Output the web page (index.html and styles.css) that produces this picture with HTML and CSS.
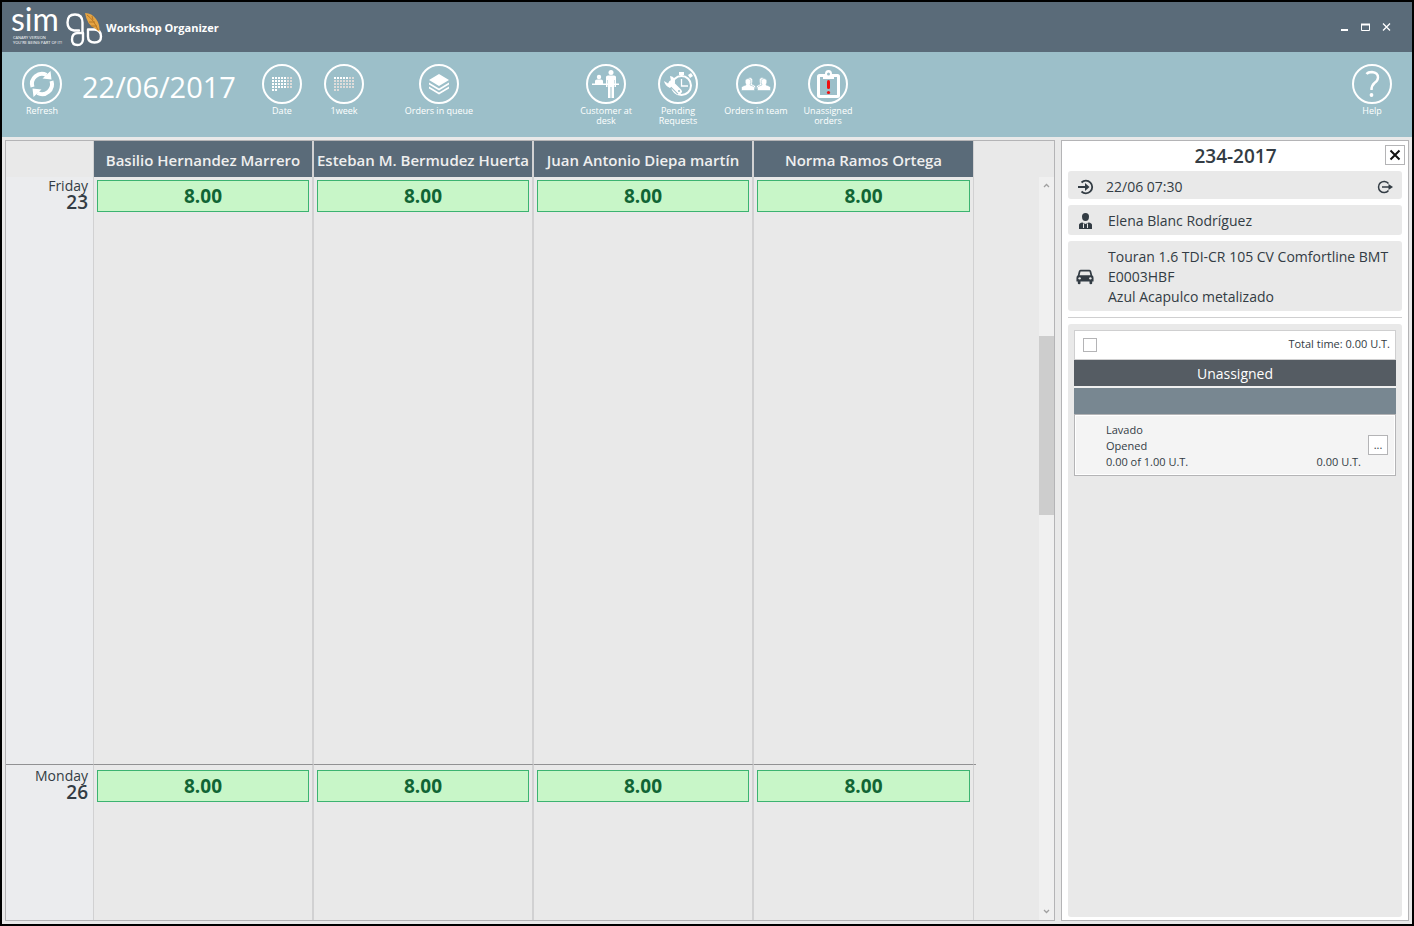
FILE: index.html
```html
<!DOCTYPE html>
<html lang="en">
<head>
<meta charset="utf-8">
<title>Workshop Organizer</title>
<link rel="stylesheet" href="styles.css">
</head>
<body>
<header class="titlebar">
  <svg class="logo" width="94" height="50" viewBox="0 0 94 50" role="img" aria-label="simgo">
    <text class="logo-word" x="-1" y="29">sim</text>
    <text class="logo-note" x="1" y="37">CANARY VERSION</text>
    <text class="logo-note" x="1" y="42">YOU'RE BEING PART OF IT!</text>
    <g fill="none" stroke="#fff" stroke-width="2.400" stroke-linejoin="round" stroke-linecap="round">
      <path d="M67 28.500H62Q55.500 27.500 55.500 20.500Q55.500 12.500 63 12.500Q70.500 12.500 70.500 20.500V30"/>
      <path d="M71 31V37.500Q70.500 43 65.500 43Q60 43 60 37.500Q60 31 66 31Z"/>
      <path d="M76 27.500H82.500Q89 28 89 34.500Q89 40.500 82.500 40.500Q76 40.500 76 34.500Z"/>
    </g>
    <path fill="#e5a443" d="M73 11Q80 11 84 17Q88 22 87.500 30L83 26.500Q75 23 73 11Z"/>
    <path fill="none" stroke="#b87825" stroke-width="1" d="M75 13Q82 18 86 28M79 24L85 24M77 20L83 20M80 14L81 18"/>
  </svg>
  <h1 class="app-name">Workshop Organizer</h1>
  <div class="window-buttons">
    <button type="button" aria-label="Minimize"><svg width="11" height="11"><path d="M2 8H9" stroke="#fff" stroke-width="2"/></svg></button>
    <button type="button" aria-label="Maximize"><svg width="11" height="11"><path d="M1.500 2.500H9.500V8.500H1.500ZM1 2.500H10" fill="none" stroke="#fff"/><path d="M1 2.500H10" stroke="#fff" stroke-width="2"/></svg></button>
    <button type="button" aria-label="Close"><svg width="11" height="11"><path d="M2 1.500L9 8.500M9 1.500L2 8.500" fill="none" stroke="#fff" stroke-width="1.300"/></svg></button>
  </div>
</header>

<nav class="toolbar">
  <button type="button" class="tool">
    <span class="disc"><svg width="36" height="36" viewBox="0 0 36 36"><g fill="none" stroke="#fff" stroke-width="4"><path d="M8.500 21A10 10 0 0 1 22.500 9"/><path d="M27.500 15A10 10 0 0 1 13.500 27"/></g><path fill="#fff" d="M18.500 12.500L27.500 13.500L26.500 5ZM17.500 23.500L8.500 22.500L9.500 31Z"/></svg></span>
    <span>Refresh</span>
  </button>
  <time class="current-date" datetime="2017-06-22">22/06/2017</time>
  <div class="tool-group range-tools">
    <button type="button" class="tool">
      <span class="disc"><svg width="36" height="36" viewBox="0 0 36 36"><g fill="none" stroke="#fff" stroke-width="2" stroke-dasharray="2 1"><path d="M8 12H22M8 15H22M8 18H22M8 21H22M8 24H13"/><path stroke="#dedcda" d="M23 12H28M23 15H28M23 18H28M23 21H28"/></g></svg></span>
      <span>Date</span>
    </button>
    <button type="button" class="tool">
      <span class="disc"><svg width="36" height="36" viewBox="0 0 36 36"><g fill="none" stroke="#dedcda" stroke-width="2" stroke-dasharray="2 1"><path stroke="#fff" d="M8 12H22"/><path d="M23 12H28M8 15H22M23 15H28M8 18H22M23 18H28M8 21H22M23 21H28M8 24H13"/></g></svg></span>
      <span>1week</span>
    </button>
  </div>
  <button type="button" class="tool tool-wide queue-tool">
    <span class="disc"><svg width="36" height="36" viewBox="0 0 36 36"><path fill="#fff" d="M18 8L28 14L18 20L8 14ZM8 16.500L18 22.500L28 16.500V18.500L18 24.500L8 18.500ZM8 20.500L18 26.500L28 20.500V22.500L18 28.500L8 22.500Z"/></svg></span>
    <span>Orders in queue</span>
  </button>
  <div class="tool-group order-tools">
    <button type="button" class="tool">
      <span class="disc"><svg width="36" height="36" viewBox="0 0 36 36"><g fill="#fff"><path d="M4 17.500H31V19H4Z"/><circle cx="11" cy="11" r="2.200"/><path d="M7 18V15Q7 13.500 9 13.500H13Q15 13.500 15 15V18Z"/><circle cx="23" cy="6.500" r="2.500"/><path d="M18 11Q18 9.500 20 9.500H26Q28 9.500 28 11V21H26.500V14H26V32H23.500V21H22.500V32H20V14H19.500V21H18Z"/></g></svg></span>
      <span>Customer at desk</span>
    </button>
    <button type="button" class="tool">
      <span class="disc"><svg width="36" height="36" viewBox="0 0 36 36"><circle cx="21.500" cy="19.500" r="9.500" fill="none" stroke="#fff" stroke-width="2"/><path d="M21.500 13V20H28" fill="none" stroke="#fff" stroke-width="1.300"/><path fill="#fff" d="M19 6H24V9H19ZM20.500 8H22.500V11H20.500ZM28 9L31 7L33 10L30 12Z"/><path d="M12 18L20 26" stroke="#9cbfc9" stroke-width="7"/><path d="M11 17L19.500 25.500" stroke="#fff" stroke-width="5" stroke-linecap="round"/><path fill="#fff" d="M4 15L8 17.500L11 15L10 10Q16 11 15 17L10 22Q5 20 4 15Z"/><circle cx="19" cy="25" r="1" fill="#9cbfc9"/></svg></span>
      <span>Pending Requests</span>
    </button>
    <button type="button" class="tool tool-wide">
      <span class="disc"><svg width="36" height="36" viewBox="0 0 36 36"><g fill="#fff" stroke="#9cbfc9" stroke-width=".6"><path d="M8 23V19.500L10 18Q8 12 12 11.500Q16 12 14 18L17.500 20V23Z"/><path d="M28 23V19.500L26 18Q28 12 24 11.500Q20 12 22 18L18.500 20V23Z"/><path d="M3.500 24.500V21.500Q4 20 8 19Q5.500 13 10 12.500Q14.500 13 12 19Q16 20 16.500 21.500V24.500Z"/><path d="M19.500 24.500V21.500Q20 20 24 19Q21.500 13 26 12.500Q30.500 13 28 19Q32 20 32.500 21.500V24.500Z"/></g></svg></span>
      <span>Orders in team</span>
    </button>
    <button type="button" class="tool unassigned-tool">
      <span class="disc"><svg width="36" height="36" viewBox="0 0 36 36"><rect x="8.500" y="9.500" width="20" height="21" rx="1" fill="none" stroke="#fff" stroke-width="3"/><path fill="#fff" d="M13 8H15Q15 4 18.500 4Q22 4 22 8H24V13H13Z"/><circle cx="18.500" cy="8" r="1.500" fill="#9cbfc9"/><path d="M18.500 15.500V21.500" stroke="#f01010" stroke-width="3" stroke-linecap="round"/><circle cx="18.500" cy="26.500" r="1.600" fill="#f01010"/></svg></span>
      <span>Unassigned orders</span>
    </button>
  </div>
  <button type="button" class="tool help-tool">
    <span class="disc"><svg width="36" height="36" viewBox="0 0 36 36"><path d="M12.500 8Q14 6 18 6Q24 6.500 24 11.500Q24 14.500 20.500 17Q17.500 19.500 17.500 24" fill="none" stroke="#fff" stroke-width="2.400"/><circle cx="17.500" cy="29" r="1.900" fill="#fff"/></svg></span>
    <span>Help</span>
  </button>
</nav>

<main class="workspace">
  <section class="board">
    <table class="schedule">
      <thead>
        <tr>
          <td class="corner"></td>
          <th scope="col">Basilio Hernandez Marrero</th>
          <th scope="col">Esteban M. Bermudez Huerta</th>
          <th scope="col">Juan Antonio Diepa martín</th>
          <th scope="col">Norma Ramos Ortega</th>
          <td class="line-end"></td>
        </tr>
      </thead>
      <tbody>
        <tr class="day">
          <th scope="row">Friday<strong>23</strong></th>
          <td><div class="hours">8.00</div></td>
          <td><div class="hours">8.00</div></td>
          <td><div class="hours">8.00</div></td>
          <td><div class="hours">8.00</div></td>
          <td class="line-end"></td>
        </tr>
        <tr class="day day-next">
          <th scope="row">Monday<strong>26</strong></th>
          <td><div class="hours">8.00</div></td>
          <td><div class="hours">8.00</div></td>
          <td><div class="hours">8.00</div></td>
          <td><div class="hours">8.00</div></td>
          <td class="line-end"></td>
        </tr>
      </tbody>
    </table>
    <div class="scrollbar">
      <button type="button" aria-label="Scroll up"><svg width="7" height="5"><path d="M1 4L3.500 1.500L6 4" fill="none" stroke="#a0a0a0" stroke-width="1.300"/></svg></button>
      <div class="track"><div class="thumb"></div></div>
      <button type="button" aria-label="Scroll down"><svg width="7" height="5"><path d="M1 1L3.500 3.500L6 1" fill="none" stroke="#a0a0a0" stroke-width="1.300"/></svg></button>
    </div>
  </section>

  <aside class="details">
    <div class="details-head">
      <h2>234-2017</h2>
      <button type="button" class="close" aria-label="Close order"><svg width="12" height="12"><path d="M1.500 1.500L10.500 10.500M10.500 1.500L1.500 10.500" stroke="#111" stroke-width="2"/></svg></button>
    </div>
    <div class="info info-time">
      <svg width="18" height="16" viewBox="0 0 18 16"><path d="M5.500 3.500A6.300 6.300 0 1 1 5.500 12.500M2 8H12" fill="none" stroke="#333c44" stroke-width="1.800"/><path d="M9 4L13.500 8L9 12Z" fill="#333c44"/></svg>
      <span class="info-text">22/06 07:30</span>
      <svg width="18" height="16" viewBox="0 0 18 16"><path d="M12.500 4.500A5.600 5.600 0 1 0 12.500 11.500M6 8H14" fill="none" stroke="#333c44" stroke-width="1.500"/><path d="M12.500 5L17 8L12.500 11Z" fill="#333c44"/></svg>
    </div>
    <div class="info info-person">
      <svg width="18" height="18" viewBox="0 0 18 18"><path fill="#333c44" d="M9.500 1Q13 1 13 4.500Q13 9 9.500 9Q6 9 6 4.500Q6 1 9.500 1ZM3 17V13Q3 11 6.500 10.500L9.500 12L12.500 10.500Q16 11 16 13V17Z"/><path d="M7.500 11.500V16M11.500 11.500V16" fill="none" stroke="#e9e9e9"/></svg>
      <span class="info-text">Elena Blanc Rodríguez</span>
    </div>
    <div class="info info-car">
      <svg width="18" height="18" viewBox="0 0 20 18"><path fill="#333c44" fill-rule="evenodd" d="M5 1H15Q16.500 1 17 3L18 7Q19.500 8 19.500 10V14H18V16Q18 17 16.500 17Q15 17 15 16V14H5V16Q5 17 3.500 17Q2 17 2 16V14H.5V10Q.5 8 2 7L3 3Q3.500 1 5 1ZM5 3L4 7H16L15 3Z"/><circle cx="4" cy="10.500" r="1.300" fill="#e9e9e9"/><circle cx="16" cy="10.500" r="1.300" fill="#e9e9e9"/></svg>
      <span class="info-text">Touran 1.6 TDI-CR 105 CV Comfortline BMT<br>E0003HBF<br>Azul Acapulco metalizado</span>
    </div>
    <hr class="divider">
    <div class="tasks">
      <div class="task-total">
        <input type="checkbox" id="select-all" aria-label="Select all tasks">
        <label for="select-all">Total time: 0.00 U.T.</label>
      </div>
      <h3 class="task-group">Unassigned</h3>
      <div class="task-band"></div>
      <div class="task">
        <div class="task-text">
          <div>Lavado</div>
          <div>Opened</div>
          <div class="task-hours"><span>0.00 of 1.00 U.T.</span><span>0.00 U.T.</span></div>
        </div>
        <button type="button" class="more">...</button>
      </div>
    </div>
  </aside>
</main>
</body>
</html>
```

FILE: styles.css
```css
* { box-sizing: border-box; }

body {
  margin: 0;
  min-height: 100vh;
  display: flex;
  flex-direction: column;
  border: 2px solid #000;
  background: #e9e9e9;
  color: #333c44;
  font: 14px/20px "Open Sans", "Noto Sans", sans-serif;
}

button {
  padding: 0;
  border: 0;
  background: none;
  color: inherit;
  font: inherit;
}

svg { display: block; flex: none; }
h1, h2, h3 { margin: 0; }

.titlebar {
  display: flex;
  align-items: center;
  height: 50px;
  padding: 0 20px 0 10px;
  background: #5a6b79;
  color: #fff;
}

.logo { overflow: visible; }
.logo-word { fill: #fff; font: 32px Lato, sans-serif; }
.logo-note { fill: #fff; font-size: 4px; }

.app-name {
  font-size: 11px;
  font-weight: 700;
  line-height: 16px;
  padding-top: 2px;
}

.window-buttons {
  display: flex;
  gap: 10px;
  margin-left: auto;
}

.toolbar {
  display: flex;
  align-items: flex-start;
  height: 85px;
  padding: 12px 10px 0;
  background: #9cbfc9;
  color: #fff;
}

.tool {
  display: flex;
  flex-direction: column;
  align-items: center;
  flex: none;
  gap: 2px;
  width: 60px;
  font-size: 9px;
  line-height: 10px;
}

.tool-wide { width: 72px; }

.disc {
  display: grid;
  place-items: center;
  width: 40px;
  height: 40px;
  border: 2px solid #fff;
  border-radius: 50%;
}

.current-date {
  width: 154px;
  margin-left: 10px;
  font-size: 29px;
  line-height: 46px;
}

.tool-group { display: flex; gap: 12px; }
.range-tools { gap: 2px; margin-left: 16px; }
.queue-tool { margin-left: 29px; }
.order-tools { margin-left: 101px; }
.unassigned-tool { margin-left: -6px; }
.help-tool { margin-left: auto; }

.workspace {
  display: flex;
  flex: 1;
  gap: 6px;
  padding: 3px;
}

.board {
  display: flex;
  flex: 1;
  justify-content: space-between;
  border: 1px solid #b4b4b6;
}

.schedule {
  width: 970px;
  height: 100%;
  table-layout: fixed;
  border-spacing: 0;
}

.schedule th, .schedule td {
  padding: 0;
  border-right: 2px solid #d1d1d2;
  vertical-align: top;
}

.schedule thead th {
  width: 220px;
  height: 36px;
  padding-top: 2px;
  background: #5a6b79;
  background-clip: padding-box;
  color: #efefef;
  font-size: 15px;
  font-weight: 600;
  vertical-align: middle;
  white-space: nowrap;
}

.schedule .corner { width: 88px; border-right-width: 1px; }
.schedule th:nth-child(5), .schedule td:nth-child(5) { border-right-width: 1px; }

.schedule .day { height: 587px; }
.schedule .day-next { height: auto; }
.schedule .day td { padding: 3px; }

.schedule .day th {
  padding-right: 5px;
  border-right-width: 1px;
  background: #ebecee;
  font-weight: 400;
  line-height: 17px;
  text-align: right;
}

.schedule .day strong {
  display: block;
  font-size: 19px;
  font-weight: 600;
}

.schedule .day-next th, .schedule .day-next td { border-top: 1px solid #919193; }
.schedule .day-next th { padding-top: 2px; }
.schedule .day-next td { padding-top: 5px; }

.schedule .line-end, .schedule .day .line-end {
  width: 2px;
  padding: 0;
  border-right: 0;
}

.hours {
  height: 32px;
  border: 1px solid #3cb371;
  background: #c8f6c8;
  color: #116535;
  font-size: 19px;
  font-weight: 700;
  line-height: 30px;
  text-align: center;
}

.scrollbar {
  display: flex;
  flex-direction: column;
  width: 15px;
  margin-top: 36px;
  background: #f0f0f0;
}

.scrollbar button {
  display: grid;
  place-items: center;
  height: 17px;
}

.track { flex: 1; padding-top: 142px; }
.thumb { height: 179px; background: #cdcdcd; }

.details {
  display: flex;
  flex-direction: column;
  width: 348px;
  padding: 4px 6px 3px;
  border: 1px solid #b4b4b6;
  background: #fff;
}

.details-head {
  display: grid;
  grid-template-columns: 1fr auto;
  height: 26px;
  margin-right: -3px;
}

.details-head h2 {
  padding-left: 18px;
  font-size: 19px;
  font-weight: 600;
  line-height: 22px;
  text-align: center;
}

.close, .more {
  display: grid;
  place-items: center;
  width: 20px;
  height: 20px;
  border: 1px solid #b4b4b6;
  background: #fff;
}

.info {
  display: flex;
  align-items: center;
  gap: 14px;
  margin-bottom: 6px;
  padding: 6px 8px 4px;
  border-radius: 3px;
  background: #e9e9e9;
}

.info-time { gap: 12px; padding-bottom: 2px; }
.info-car { padding-right: 0; white-space: nowrap; }
.info-time .info-text { flex: 1; }

.divider {
  width: 100%;
  height: 1px;
  margin: 0 0 6px;
  border: 0;
  background: #cfcfd0;
}

.tasks {
  flex: 1;
  padding: 6px;
  border-radius: 3px;
  background: #e9e9e9;
  font-size: 11px;
  line-height: 16px;
}

.task-total {
  display: flex;
  justify-content: space-between;
  height: 30px;
  padding: 5px;
  border: 1px solid #cfcfd0;
  background: #fff;
}

.task-total input {
  appearance: none;
  width: 14px;
  height: 14px;
  margin: 2px 3px;
  border: 1px solid #b4b4b6;
  background: #fff;
}

.task-group {
  height: 26px;
  padding-top: 1px;
  background: #555c63;
  color: #fff;
  font-size: 14px;
  font-weight: 400;
  line-height: 26px;
  text-align: center;
}

.task-band {
  height: 28px;
  border-top: 2px solid #f0f0f0;
  background: #788791;
}

.task {
  display: flex;
  align-items: center;
  gap: 7px;
  height: 62px;
  padding: 0 7px 0 31px;
  border: 1px solid #b4b4b6;
  background: #f4f4f4;
  box-shadow: inset 0 0 0 1px #fff;
}

.task-text { flex: 1; padding-top: 2px; }
.task-hours { display: flex; justify-content: space-between; }
```
